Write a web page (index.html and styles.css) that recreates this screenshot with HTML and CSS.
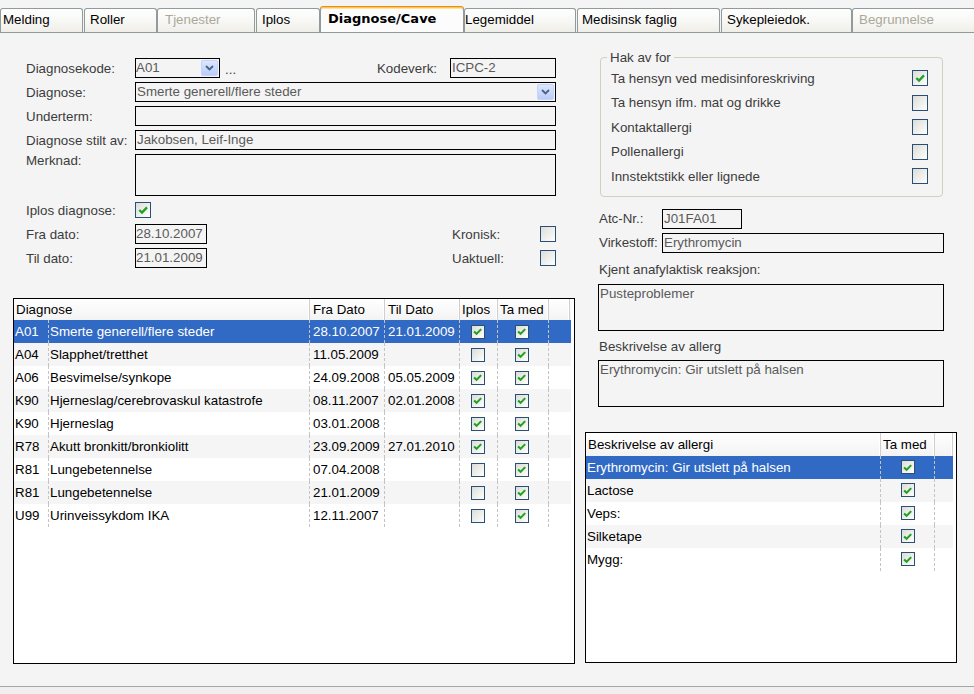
FILE: index.html
```html
<!DOCTYPE html>
<html lang="no">
<head>
<meta charset="utf-8">
<title>Diagnose/Cave</title>
<link rel="stylesheet" href="styles.css">
</head>
<body>
<div class="app">
  <div class="tabs">
    <div class="tab t-melding">Melding</div>
    <div class="tab t-roller">Roller</div>
    <div class="tab t-tjen disabled">Tjenester</div>
    <div class="tab t-iplos">Iplos</div>
    <div class="tab t-diag active">Diagnose/Cave</div>
    <div class="tab t-lege">Legemiddel</div>
    <div class="tab t-med">Medisinsk faglig</div>
    <div class="tab t-syk">Sykepleiedok.</div>
    <div class="tab t-beg disabled">Begrunnelse</div>
  </div>

  <div class="main">
    <div class="left">
      <div class="form">
        <div class="row">
          <span class="lbl">Diagnosekode:</span>
          <div class="field combo w-code"><span class="val">A01</span><span class="ddbtn"><svg viewBox="0 0 9 6" width="9" height="6"><path d="M1 1 L4.5 4.5 L8 1" fill="none" stroke="#4d6185" stroke-width="1.8"/></svg></span></div>
          <span class="dots">...</span>
          <span class="lbl-kode">Kodeverk:</span>
          <div class="field w-kode">ICPC-2</div>
        </div>
        <div class="row">
          <span class="lbl">Diagnose:</span>
          <div class="field combo grow"><span class="val">Smerte generell/flere steder</span><span class="ddbtn"><svg viewBox="0 0 9 6" width="9" height="6"><path d="M1 1 L4.5 4.5 L8 1" fill="none" stroke="#4d6185" stroke-width="1.8"/></svg></span></div>
        </div>
        <div class="row">
          <span class="lbl">Underterm:</span>
          <div class="field grow"></div>
        </div>
        <div class="row">
          <span class="lbl">Diagnose stilt av:</span>
          <div class="field grow">Jakobsen, Leif-Inge</div>
        </div>
        <div class="row tall">
          <span class="lbl lbl-top">Merknad:</span>
          <div class="field grow area-l"></div>
        </div>
        <div class="row">
          <span class="lbl">Iplos diagnose:</span>
          <span class="cb lg"><svg viewBox="0 0 12 12" width="12" height="12"><path d="M2.3 6 L5 8.6 L10 3.4" fill="none" stroke="#21a121" stroke-width="2.3"/></svg></span>
        </div>
        <div class="row">
          <span class="lbl">Fra dato:</span>
          <div class="field w-date">28.10.2007</div>
          <div class="side"><span class="lbl-side">Kronisk:</span><span class="cb lg"></span></div>
        </div>
        <div class="row">
          <span class="lbl">Til dato:</span>
          <div class="field w-date">21.01.2009</div>
          <div class="side"><span class="lbl-side">Uaktuell:</span><span class="cb lg"></span></div>
        </div>
      </div>

      <div class="grid gl">
        <div class="ghead">
          <div class="hc c-diag">Diagnose</div>
          <div class="hc c-fra">Fra Dato</div>
          <div class="hc c-til">Til Dato</div>
          <div class="hc c-ip">Iplos</div>
          <div class="hc c-tm">Ta med</div>
          <div class="hc c-ex"></div>
        </div>
        <div class="grow-row sel">
          <div class="gc c-code">A01</div><div class="gc c-desc">Smerte generell/flere steder</div><div class="gc c-fra">28.10.2007</div><div class="gc c-til">21.01.2009</div>
          <div class="gc c-ip ck"><span class="cb sm"><svg viewBox="0 0 12 12" width="12" height="12"><path d="M2.3 6 L5 8.6 L10 3.4" fill="none" stroke="#21a121" stroke-width="2.3"/></svg></span></div>
          <div class="gc c-tm ck"><span class="cb sm"><svg viewBox="0 0 12 12" width="12" height="12"><path d="M2.3 6 L5 8.6 L10 3.4" fill="none" stroke="#21a121" stroke-width="2.3"/></svg></span></div>
          <div class="gc c-ex"></div>
        </div>
        <div class="grow-row alt">
          <div class="gc c-code">A04</div><div class="gc c-desc">Slapphet/tretthet</div><div class="gc c-fra">11.05.2009</div><div class="gc c-til"></div>
          <div class="gc c-ip ck"><span class="cb sm"></span></div>
          <div class="gc c-tm ck"><span class="cb sm"><svg viewBox="0 0 12 12" width="12" height="12"><path d="M2.3 6 L5 8.6 L10 3.4" fill="none" stroke="#21a121" stroke-width="2.3"/></svg></span></div>
          <div class="gc c-ex"></div>
        </div>
        <div class="grow-row">
          <div class="gc c-code">A06</div><div class="gc c-desc">Besvimelse/synkope</div><div class="gc c-fra">24.09.2008</div><div class="gc c-til">05.05.2009</div>
          <div class="gc c-ip ck"><span class="cb sm"><svg viewBox="0 0 12 12" width="12" height="12"><path d="M2.3 6 L5 8.6 L10 3.4" fill="none" stroke="#21a121" stroke-width="2.3"/></svg></span></div>
          <div class="gc c-tm ck"><span class="cb sm"><svg viewBox="0 0 12 12" width="12" height="12"><path d="M2.3 6 L5 8.6 L10 3.4" fill="none" stroke="#21a121" stroke-width="2.3"/></svg></span></div>
          <div class="gc c-ex"></div>
        </div>
        <div class="grow-row alt">
          <div class="gc c-code">K90</div><div class="gc c-desc">Hjerneslag/cerebrovaskul katastrofe</div><div class="gc c-fra">08.11.2007</div><div class="gc c-til">02.01.2008</div>
          <div class="gc c-ip ck"><span class="cb sm"><svg viewBox="0 0 12 12" width="12" height="12"><path d="M2.3 6 L5 8.6 L10 3.4" fill="none" stroke="#21a121" stroke-width="2.3"/></svg></span></div>
          <div class="gc c-tm ck"><span class="cb sm"><svg viewBox="0 0 12 12" width="12" height="12"><path d="M2.3 6 L5 8.6 L10 3.4" fill="none" stroke="#21a121" stroke-width="2.3"/></svg></span></div>
          <div class="gc c-ex"></div>
        </div>
        <div class="grow-row">
          <div class="gc c-code">K90</div><div class="gc c-desc">Hjerneslag</div><div class="gc c-fra">03.01.2008</div><div class="gc c-til"></div>
          <div class="gc c-ip ck"><span class="cb sm"><svg viewBox="0 0 12 12" width="12" height="12"><path d="M2.3 6 L5 8.6 L10 3.4" fill="none" stroke="#21a121" stroke-width="2.3"/></svg></span></div>
          <div class="gc c-tm ck"><span class="cb sm"><svg viewBox="0 0 12 12" width="12" height="12"><path d="M2.3 6 L5 8.6 L10 3.4" fill="none" stroke="#21a121" stroke-width="2.3"/></svg></span></div>
          <div class="gc c-ex"></div>
        </div>
        <div class="grow-row alt">
          <div class="gc c-code">R78</div><div class="gc c-desc">Akutt bronkitt/bronkiolitt</div><div class="gc c-fra">23.09.2009</div><div class="gc c-til">27.01.2010</div>
          <div class="gc c-ip ck"><span class="cb sm"><svg viewBox="0 0 12 12" width="12" height="12"><path d="M2.3 6 L5 8.6 L10 3.4" fill="none" stroke="#21a121" stroke-width="2.3"/></svg></span></div>
          <div class="gc c-tm ck"><span class="cb sm"><svg viewBox="0 0 12 12" width="12" height="12"><path d="M2.3 6 L5 8.6 L10 3.4" fill="none" stroke="#21a121" stroke-width="2.3"/></svg></span></div>
          <div class="gc c-ex"></div>
        </div>
        <div class="grow-row">
          <div class="gc c-code">R81</div><div class="gc c-desc">Lungebetennelse</div><div class="gc c-fra">07.04.2008</div><div class="gc c-til"></div>
          <div class="gc c-ip ck"><span class="cb sm"></span></div>
          <div class="gc c-tm ck"><span class="cb sm"><svg viewBox="0 0 12 12" width="12" height="12"><path d="M2.3 6 L5 8.6 L10 3.4" fill="none" stroke="#21a121" stroke-width="2.3"/></svg></span></div>
          <div class="gc c-ex"></div>
        </div>
        <div class="grow-row alt">
          <div class="gc c-code">R81</div><div class="gc c-desc">Lungebetennelse</div><div class="gc c-fra">21.01.2009</div><div class="gc c-til"></div>
          <div class="gc c-ip ck"><span class="cb sm"></span></div>
          <div class="gc c-tm ck"><span class="cb sm"><svg viewBox="0 0 12 12" width="12" height="12"><path d="M2.3 6 L5 8.6 L10 3.4" fill="none" stroke="#21a121" stroke-width="2.3"/></svg></span></div>
          <div class="gc c-ex"></div>
        </div>
        <div class="grow-row">
          <div class="gc c-code">U99</div><div class="gc c-desc">Urinveissykdom IKA</div><div class="gc c-fra">12.11.2007</div><div class="gc c-til"></div>
          <div class="gc c-ip ck"><span class="cb sm"></span></div>
          <div class="gc c-tm ck"><span class="cb sm"><svg viewBox="0 0 12 12" width="12" height="12"><path d="M2.3 6 L5 8.6 L10 3.4" fill="none" stroke="#21a121" stroke-width="2.3"/></svg></span></div>
          <div class="gc c-ex"></div>
        </div>
      </div>
    </div>

    <div class="right">
      <fieldset class="group">
        <legend>Hak av for</legend>
        <div class="gitem"><span>Ta hensyn ved medisinforeskriving</span><span class="cb md"><svg viewBox="0 0 12 12" width="12" height="12"><path d="M2.3 6 L5 8.6 L10 3.4" fill="none" stroke="#21a121" stroke-width="2.3"/></svg></span></div>
        <div class="gitem"><span>Ta hensyn ifm. mat og drikke</span><span class="cb md"></span></div>
        <div class="gitem"><span>Kontaktallergi</span><span class="cb md"></span></div>
        <div class="gitem"><span>Pollenallergi</span><span class="cb md"></span></div>
        <div class="gitem"><span>Innstektstikk eller lignede</span><span class="cb md"></span></div>
      </fieldset>

      <div class="rsec">
        <div class="row">
          <span class="rlbl">Atc-Nr.:</span>
          <div class="field w-atc">J01FA01</div>
        </div>
        <div class="row">
          <span class="rlbl">Virkestoff:</span>
          <div class="field grow">Erythromycin</div>
        </div>
        <div class="rcap cap1">Kjent anafylaktisk reaksjon:</div>
        <div class="field area-r">Pusteproblemer</div>
        <div class="rcap cap2">Beskrivelse av allerg</div>
        <div class="field area-r">Erythromycin: Gir utslett på halsen</div>
      </div>

      <div class="grid gr">
        <div class="ghead">
          <div class="hc r-desc">Beskrivelse av allergi</div>
          <div class="hc r-tm">Ta med</div>
          <div class="hc r-ex"></div>
        </div>
        <div class="grow-row sel">
          <div class="gc r-desc">Erythromycin: Gir utslett på halsen</div>
          <div class="gc r-tm ck"><span class="cb sm"><svg viewBox="0 0 12 12" width="12" height="12"><path d="M2.3 6 L5 8.6 L10 3.4" fill="none" stroke="#21a121" stroke-width="2.3"/></svg></span></div>
          <div class="gc r-ex"></div>
        </div>
        <div class="grow-row alt">
          <div class="gc r-desc">Lactose</div>
          <div class="gc r-tm ck"><span class="cb sm"><svg viewBox="0 0 12 12" width="12" height="12"><path d="M2.3 6 L5 8.6 L10 3.4" fill="none" stroke="#21a121" stroke-width="2.3"/></svg></span></div>
          <div class="gc r-ex"></div>
        </div>
        <div class="grow-row">
          <div class="gc r-desc">Veps:</div>
          <div class="gc r-tm ck"><span class="cb sm"><svg viewBox="0 0 12 12" width="12" height="12"><path d="M2.3 6 L5 8.6 L10 3.4" fill="none" stroke="#21a121" stroke-width="2.3"/></svg></span></div>
          <div class="gc r-ex"></div>
        </div>
        <div class="grow-row alt">
          <div class="gc r-desc">Silketape</div>
          <div class="gc r-tm ck"><span class="cb sm"><svg viewBox="0 0 12 12" width="12" height="12"><path d="M2.3 6 L5 8.6 L10 3.4" fill="none" stroke="#21a121" stroke-width="2.3"/></svg></span></div>
          <div class="gc r-ex"></div>
        </div>
        <div class="grow-row">
          <div class="gc r-desc">Mygg:</div>
          <div class="gc r-tm ck"><span class="cb sm"><svg viewBox="0 0 12 12" width="12" height="12"><path d="M2.3 6 L5 8.6 L10 3.4" fill="none" stroke="#21a121" stroke-width="2.3"/></svg></span></div>
          <div class="gc r-ex"></div>
        </div>
      </div>
    </div>
  </div>

  <div class="footer"></div>
</div>
</body>
</html>
```

FILE: styles.css
```css
* { box-sizing: border-box; }
html, body { margin: 0; padding: 0; }
body {
  width: 974px;
  height: 694px;
  overflow: hidden;
  background: #f4f4f4;
  font-family: "Liberation Sans", Arial, sans-serif;
  font-size: 13.33px;
  color: #000;
}
.app { display: flex; flex-direction: column; height: 694px; }

/* ---------- tabs ---------- */
.tabs {
  display: flex;
  align-items: flex-end;
  height: 33px;
  flex-shrink: 0;
  border-bottom: 1px solid #919b9c;
  overflow: hidden;
}
.tab {
  flex-shrink: 0;
  height: 24px;
  border: 1px solid #919b9c;
  border-bottom: none;
  border-radius: 3px 3px 0 0;
  background: linear-gradient(#fefefe, #f7f7f4 55%, #efeee9);
  line-height: 22px;
  padding-left: 5px;
  white-space: nowrap;
  overflow: hidden;
  color: #000;
}
.tab.disabled { color: #aca899; }
.tab.active {
  height: 27px;
  margin-bottom: -1px;
  background: #fcfcfd;
  border-top: 1px solid #e68b2c;
  box-shadow: inset 0 1px 0 #ffc83c, inset 0 2px 0 #ffe3a0;
  font-family: "DejaVu Sans", sans-serif;
  font-weight: bold;
  font-size: 13px;
  line-height: 24px;
  padding-left: 7px;
  position: relative;
}
.t-melding { width: 83px; padding-left: 2px; }
.t-roller { width: 73px; margin-left: 1px; }
.t-tjen { width: 98px; padding-left: 7px; }
.t-iplos { width: 64px; margin-left: 1px; padding-left: 5px; }
.t-diag { width: 144px; }
.t-lege { width: 112px; padding-left: 0; }
.t-med { width: 143px; margin-left: 1px; padding-left: 4px; }
.t-syk { width: 131px; margin-left: 1px; padding-left: 5px; }
.t-beg { width: 124px; padding-left: 6px; }

/* ---------- layout ---------- */
.main { display: flex; flex: 1; }
.left {
  width: 562px;
  margin-left: 13px;
  display: flex;
  flex-direction: column;
}
.right {
  width: 372px;
  margin-left: 10px;
  display: flex;
  flex-direction: column;
}
.footer {
  height: 8px;
  flex-shrink: 0;
  border-top: 1px solid #a5a5a5;
  background: #efefef;
}

/* ---------- form ---------- */
.form { margin-top: 25px; margin-left: 13px; width: 530px; }
.row {
  display: flex;
  align-items: center;
  height: 20px;
  margin-bottom: 4px;
}
.row.tall { height: 42px; align-items: flex-start; }
.lbl { width: 109px; flex-shrink: 0; color: #3c3c3c; }
.lbl-top { line-height: 14px; margin-top: 0; }
.lbl-kode { margin-left: auto; margin-right: 13px; color: #3c3c3c; }
.lbl-side { color: #3c3c3c; }
.dots { margin-left: 5px; color: #3c3c3c; align-self: flex-end; line-height: 16px; }
.side {
  margin-left: auto;
  width: 104px;
  display: flex;
  align-items: center;
  justify-content: space-between;
}

.field {
  height: 20px;
  border: 1px solid #000;
  background: #f4f4f4;
  color: #5a5a5a;
  padding-left: 1px;
  line-height: 18px;
  white-space: nowrap;
  overflow: hidden;
}
.grow { flex: 1; }
.w-code { width: 85px; padding-left: 0; }
.w-kode { width: 106px; }
.w-date { width: 72px; padding-left: 0; }
.w-atc { width: 80px; }
.area-l { height: 42px; }
.area-r { height: 47px; width: 346px; }

.combo { display: flex; align-items: center; }
.combo .val { flex: 1; overflow: hidden; }
.ddbtn {
  width: 17px;
  height: 16px;
  margin-right: 1px;
  border: 1px solid #c3d3fd;
  border-radius: 2px;
  background: linear-gradient(#dce7fe, #b8cdf9);
  display: flex;
  align-items: center;
  justify-content: center;
}

/* ---------- checkboxes ---------- */
.cb {
  display: inline-flex;
  align-items: center;
  justify-content: center;
  flex-shrink: 0;
  border: 1px solid #2a4f74;
  background: linear-gradient(135deg, #dcdcd7, #f4f4f2 70%, #ffffff);
}
.cb.lg { width: 16px; height: 16px; }
.cb.md { width: 16px; height: 16px; }
.cb.sm { width: 14px; height: 14px; }
.cb.sm svg { width: 11px; height: 11px; }

/* ---------- group box ---------- */
.group {
  margin: 17px 0 0 15px;
  width: 343px;
  border: 1px solid #d0d0bf;
  border-radius: 4px;
  padding: 1px 14px 7px 10px;
}
.group legend {
  padding: 0 3px;
  margin-left: -4px;
  line-height: 15px;
  color: #3c3c3c;
}
.gitem {
  height: 24.5px;
  display: flex;
  align-items: center;
  justify-content: space-between;
  color: #3c3c3c;
}

/* ---------- right section ---------- */
.rsec { margin-left: 13px; width: 346px; margin-top: 12px; }
.rlbl { width: 64px; flex-shrink: 0; padding-left: 1px; color: #3c3c3c; white-space: nowrap; }
.rcap { line-height: 16px; color: #3c3c3c; padding-left: 1px; }
.cap1 { margin-top: 9px; margin-bottom: 6px; }
.cap2 { margin-top: 8px; margin-bottom: 5px; }

/* ---------- grids ---------- */
.grid {
  border: 1px solid #000;
  background: #fff;
  overflow: hidden;
}
.gl { margin-top: 26px; height: 366px; }
.gr { margin-top: 25px; height: 231px; }
.ghead {
  display: flex;
  height: 21px;
  margin-right: 3px;
  background: linear-gradient(#ffffff, #f3f3f3);
}
.gr .ghead { height: 23px; }
.hc {
  flex-shrink: 0;
  border-right: 1px solid #cfcfcf;
  box-shadow: inset -1px 0 0 #fff;
  padding-left: 2px;
  line-height: 21px;
  white-space: nowrap;
}
.gr .hc { line-height: 23px; }
.grow-row {
  display: flex;
  height: 23px;
  margin-right: 3px;
  background: #fff;
}
.grow-row.alt { background: #f5f5f5; }
.grow-row.sel { background: #316ac5; color: #fff; }
.gc {
  flex-shrink: 0;
  border-right: 1px dashed #c4c4c4;
  line-height: 23px;
  white-space: nowrap;
  overflow: hidden;
  padding-left: 1px;
}
.gc.ck { display: flex; align-items: center; justify-content: center; padding-left: 0; }
.gc.c-ex, .gc.r-ex { border-right: none; }

/* left grid columns */
.c-code { width: 35px; }
.c-desc { width: 261px; }
.c-diag { width: 296px; }
.c-fra { width: 75px; padding-left: 3px; }
.c-til { width: 75px; padding-left: 3px; }
.c-ip { width: 38px; }
.gc.c-ip { padding-right: 2px; }
.c-tm { width: 51px; }
.gc.c-tm { padding-right: 3px; }
.c-ex { width: 21px; }

/* right grid columns */
.r-desc { width: 295px; }
.r-tm { width: 54px; }
.r-ex { width: 18px; }
```
